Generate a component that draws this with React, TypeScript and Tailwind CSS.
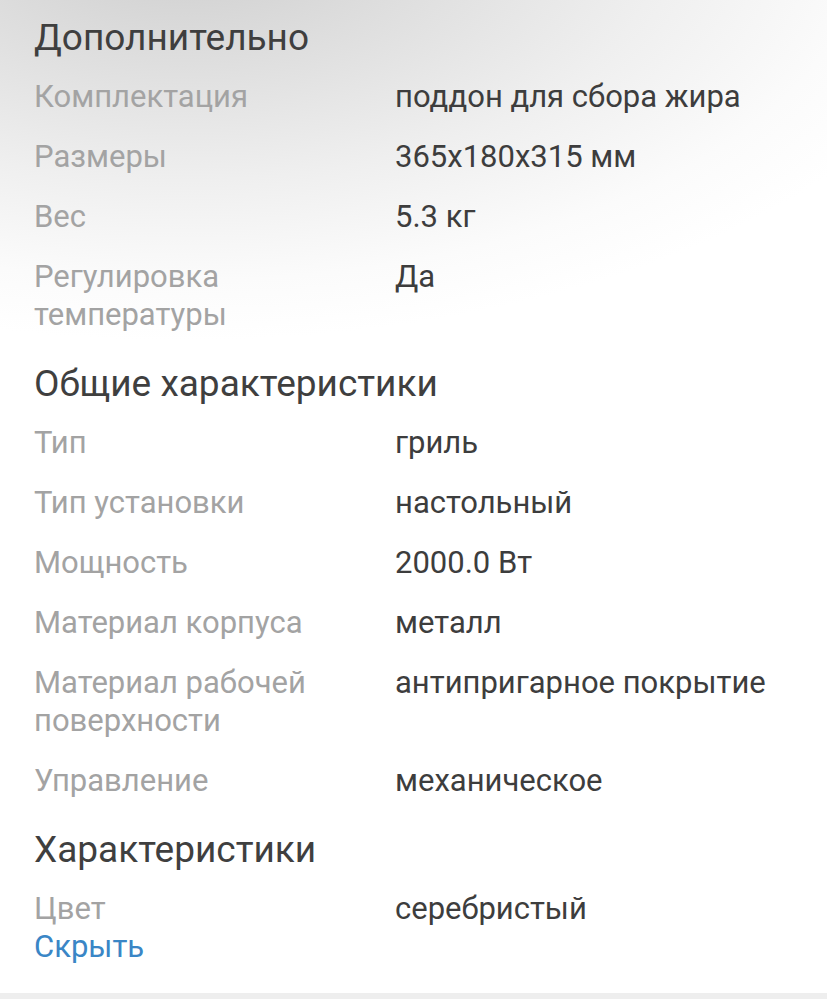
import React from "react";

type Row = { label: string[]; value: string };
type Section = { title: string; rows: Row[] };

const sections: Section[] = [
  {
    title: "Дополнительно",
    rows: [
      { label: ["Комплектация"], value: "поддон для сбора жира" },
      { label: ["Размеры"], value: "365x180x315 мм" },
      { label: ["Вес"], value: "5.3 кг" },
      { label: ["Регулировка", "температуры"], value: "Да" },
    ],
  },
  {
    title: "Общие характеристики",
    rows: [
      { label: ["Тип"], value: "гриль" },
      { label: ["Тип установки"], value: "настольный" },
      { label: ["Мощность"], value: "2000.0 Вт" },
      { label: ["Материал корпуса"], value: "металл" },
      { label: ["Материал рабочей", "поверхности"], value: "антипригарное покрытие" },
      { label: ["Управление"], value: "механическое" },
    ],
  },
];

function SpecRow({ row, last }: { row: Row; last?: boolean }) {
  return (
    <div className={`flex ${last ? "pt-[11px]" : "py-[11px]"}`}>
      <div className="w-[361px] shrink-0 text-[#a3a3a3]">
        {row.label.map((l) => (
          <div key={l} className="h-[38px] leading-[38px] whitespace-nowrap">
            {l}
          </div>
        ))}
      </div>
      <div className="h-[38px] leading-[38px] whitespace-nowrap text-[#3d3d3d]">{row.value}</div>
    </div>
  );
}

function Heading({ children, first }: { children: React.ReactNode; first?: boolean }) {
  return (
    <div
      className={`h-[68px] flex items-center text-[37px] text-[#3f3f3f] ${first ? "-mt-[1px]" : ""}`}
    >
      <span className="leading-[42px] pt-[9px] whitespace-nowrap">{children}</span>
    </div>
  );
}

export default function App() {
  return (
    <div
      className="w-[827px] h-[999px] overflow-hidden flex flex-col bg-white text-[31px]"
      style={{ fontFamily: "Roboto, 'Noto Sans', sans-serif" }}
    >
      <div className="flex-1 px-[34px] bg-[radial-gradient(ellipse_800px_400px_at_22%_-6%,#cdcdcd_0%,#dedede_30%,#efefef_60%,#fbfbfb_85%,#ffffff_100%)]">
        {sections.map((s, si) => (
          <div key={s.title}>
            <Heading first={si === 0}>{s.title}</Heading>
            {s.rows.map((r) => (
              <SpecRow key={r.value} row={r} />
            ))}
          </div>
        ))}
        <Heading>Характеристики</Heading>
        <SpecRow row={{ label: ["Цвет"], value: "серебристый" }} last />
        <div className="h-[38px] leading-[38px] text-[#3a86c6]">Скрыть</div>
      </div>
      <div className="h-[6px] bg-[#eeeeee]" />
    </div>
  );
}
